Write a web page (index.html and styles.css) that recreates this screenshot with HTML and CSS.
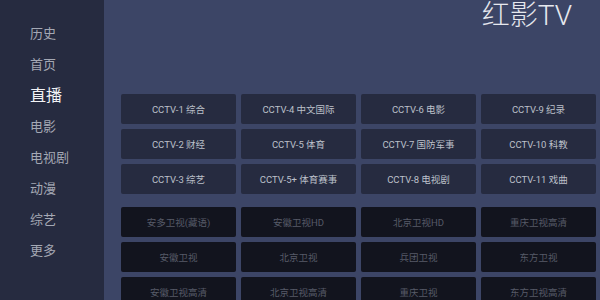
FILE: index.html
```html
<html>
<head>
	<meta charset="utf-8">
	<link rel="stylesheet" href="styles.css">
</head>
<body>
	<div class="app">
		<ul class="menu">
			<li>历史</li>
			<li>首页</li>
			<li class="on">直播</li>
			<li>电影</li>
			<li>电视剧</li>
			<li>动漫</li>
			<li>综艺</li>
			<li>更多</li>
		</ul>
		<div class="main">
			<h1 class="logo">红影TV</h1>
			<div class="grid">
				<div class="ch">CCTV-1 综合</div>
				<div class="ch">CCTV-4 中文国际</div>
				<div class="ch">CCTV-6 电影</div>
				<div class="ch">CCTV-9 纪录</div>
				<div class="ch">CCTV-2 财经</div>
				<div class="ch">CCTV-5 体育</div>
				<div class="ch">CCTV-7 国防军事</div>
				<div class="ch">CCTV-10 科教</div>
				<div class="ch">CCTV-3 综艺</div>
				<div class="ch">CCTV-5+ 体育赛事</div>
				<div class="ch">CCTV-8 电视剧</div>
				<div class="ch">CCTV-11 戏曲</div>
			</div>
			<div class="grid sat">
				<div class="ch">安多卫视(藏语)</div>
				<div class="ch">安徽卫视HD</div>
				<div class="ch">北京卫视HD</div>
				<div class="ch">重庆卫视高清</div>
				<div class="ch">安徽卫视</div>
				<div class="ch">北京卫视</div>
				<div class="ch">兵团卫视</div>
				<div class="ch">东方卫视</div>
				<div class="ch">安徽卫视高清</div>
				<div class="ch">北京卫视高清</div>
				<div class="ch">重庆卫视</div>
				<div class="ch">东方卫视高清</div>
			</div>
		</div>
	</div>
</body>
</html>
```

FILE: styles.css
```css
html,body{margin:0;padding:0;}
body{width:600px;height:300px;overflow:hidden;background:#3c4566;
	font-family:"Roboto","Noto Sans CJK SC",sans-serif;}
ul,h1{margin:0;padding:0;}
li{list-style:none;}

.app{display:flex;height:300px;}

/* 左侧菜单 */
.menu{width:104px;flex:none;background:#262b40;padding-top:18px;}
.menu li{height:31px;line-height:31px;padding-left:30px;font-size:13px;color:#a4a8b4;}
.menu li.on{font-size:16px;color:#f2f3f6;}

/* 右侧 */
.main{flex:1;padding-left:17px;}
.logo{height:94px;text-align:right;padding-right:28px;box-sizing:border-box;
	font-size:28px;font-weight:300;line-height:31px;color:#e6e8ee;}

.grid{display:grid;grid-template-columns:repeat(4,115px);grid-auto-rows:30px;gap:5px;}
.grid .ch{background:#262b40;border-radius:2px;display:flex;align-items:center;justify-content:center;
	font-size:9.5px;color:#bcc0ca;}
.sat{margin-top:13px;}
.sat .ch{background:#12141e;color:#575b68;}
```
